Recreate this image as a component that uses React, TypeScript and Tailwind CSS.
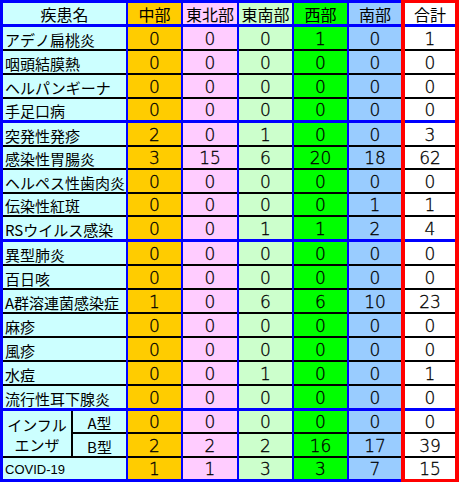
const rows: { name: string; v: number[] }[] = [
  { name: 'アデノ扁桃炎', v: [0, 0, 0, 1, 0, 1] },
  { name: '咽頭結膜熱', v: [0, 0, 0, 0, 0, 0] },
  { name: 'ヘルパンギーナ', v: [0, 0, 0, 0, 0, 0] },
  { name: '手足口病', v: [0, 0, 0, 0, 0, 0] },
  { name: '突発性発疹', v: [2, 0, 1, 0, 0, 3] },
  { name: '感染性胃腸炎', v: [3, 15, 6, 20, 18, 62] },
  { name: 'ヘルペス性歯肉炎', v: [0, 0, 0, 0, 0, 0] },
  { name: '伝染性紅斑', v: [0, 0, 0, 0, 1, 1] },
  { name: 'RSウイルス感染', v: [0, 0, 1, 1, 2, 4] },
  { name: '異型肺炎', v: [0, 0, 0, 0, 0, 0] },
  { name: '百日咳', v: [0, 0, 0, 0, 0, 0] },
  { name: 'A群溶連菌感染症', v: [1, 0, 6, 6, 10, 23] },
  { name: '麻疹', v: [0, 0, 0, 0, 0, 0] },
  { name: '風疹', v: [0, 0, 0, 0, 0, 0] },
  { name: '水痘', v: [0, 0, 1, 0, 0, 1] },
  { name: '流行性耳下腺炎', v: [0, 0, 0, 0, 0, 0] },
  { name: 'A型', v: [0, 0, 0, 0, 0, 0] },
  { name: 'B型', v: [2, 2, 2, 16, 17, 39] },
  { name: 'COVID-19', v: [1, 1, 3, 3, 7, 15] },
];

// row heights in px (keeps the grid lines where the original sits)
const heights = ['h-[22px]', 'h-[22px]', 'h-[22px]', 'h-[21px]', 'h-[22px]', 'h-[21px]', 'h-[22px]', 'h-[21px]', 'h-[22px]', 'h-[22px]', 'h-[22px]', 'h-[22px]', 'h-[22px]', 'h-[22px]', 'h-[22px]', 'h-[22px]', 'h-[21px]', 'h-[22px]', 'h-[21px]'];
const blueAfter = [3, 8, 15];

const regions = [
  { label: '中部', bg: 'bg-[#ffcc00]', w: 'w-[53px]' },
  { label: '東北部', bg: 'bg-[#ffccff]', w: 'w-[54px]' },
  { label: '東南部', bg: 'bg-[#ccffcc]', w: 'w-[53px]' },
  { label: '西部', bg: 'bg-[#00ff00]', w: 'w-[53px]' },
  { label: '南部', bg: 'bg-[#99ccff]', w: 'w-[52px]' },
];

function Sep({ i }: { i: number }) {
  if (i === rows.length - 1) return null;
  return blueAfter.includes(i) ? <div className="h-[3px] bg-[#0000ff]" /> : <div className="h-[2px] bg-black" />;
}

function VLine() {
  return <div className="w-[2px] self-stretch bg-[#0000ff]" />;
}

function ValueColumn({ label, bg, w, idx }: { label: string; bg: string; w: string; idx: number }) {
  return (
    <div className={`flex flex-col ${w} ${bg}`}>
      <div className="flex h-[21px] items-center justify-center text-[16px]">{label}</div>
      <div className="h-[3px] bg-[#0000ff]" />
      {rows.map((r, i) => (
        <div key={r.name}>
          <div className={`flex items-center justify-center pt-[2px] font-['DejaVu_Sans',sans-serif] text-[17px] font-extralight [-webkit-text-stroke:0.3px_black] ${heights[i]}`}>{r.v[idx]}</div>
          <Sep i={i} />
        </div>
      ))}
    </div>
  );
}

function NameColumn() {
  return (
    <div className="flex w-[123px] flex-col bg-[#ccffff]">
      <div className="flex h-[21px] items-center justify-center text-[16px]">疾患名</div>
      <div className="h-[3px] bg-[#0000ff]" />
      {rows.slice(0, 16).map((r, i) => (
        <div key={r.name}>
          <div className={`flex items-center pl-[2px] pt-[2px] ${heights[i]}`}>{r.name}</div>
          <Sep i={i} />
        </div>
      ))}

      {/* influenza: merged cell + A/B subrows */}
      <div className="flex">
        <div className="flex w-[68px] flex-col items-center justify-center pt-[2px] leading-[20px]">
          <span>インフル</span>
          <span>エンザ</span>
        </div>
        <div className="w-[2px] bg-black" />
        <div className="flex w-[53px] flex-col">
          <div className="flex h-[21px] items-center justify-center pt-[2px]">A型</div>
          <div className="h-[2px] bg-black" />
          <div className="flex h-[22px] items-center justify-center pt-[2px]">B型</div>
        </div>
      </div>
      <div className="h-[2px] bg-black" />
      <div className="flex h-[21px] items-center pl-[2px] pt-[2px] font-['Liberation_Sans',sans-serif] text-[13px]">COVID-19</div>
    </div>
  );
}

export default function App() {
  return (
    <div className="min-h-[484px] bg-white">
      <div className="flex w-[459px] items-start font-['Noto_Sans_CJK_JP',sans-serif] text-[15px] leading-none text-black">
        <div className="flex border-y-[3px] border-l-[3px] border-[#0000ff]">
          <NameColumn />
          {regions.map((c, idx) => (
            <div key={c.label} className="flex">
              <VLine />
              <ValueColumn label={c.label} bg={c.bg} w={c.w} idx={idx} />
            </div>
          ))}
        </div>
        <div className="border-x-4 border-y-[3px] border-[#ff0000] bg-white">
          <ValueColumn label="合計" bg="bg-white" w="w-[50px]" idx={5} />
        </div>
      </div>
    </div>
  );
}
